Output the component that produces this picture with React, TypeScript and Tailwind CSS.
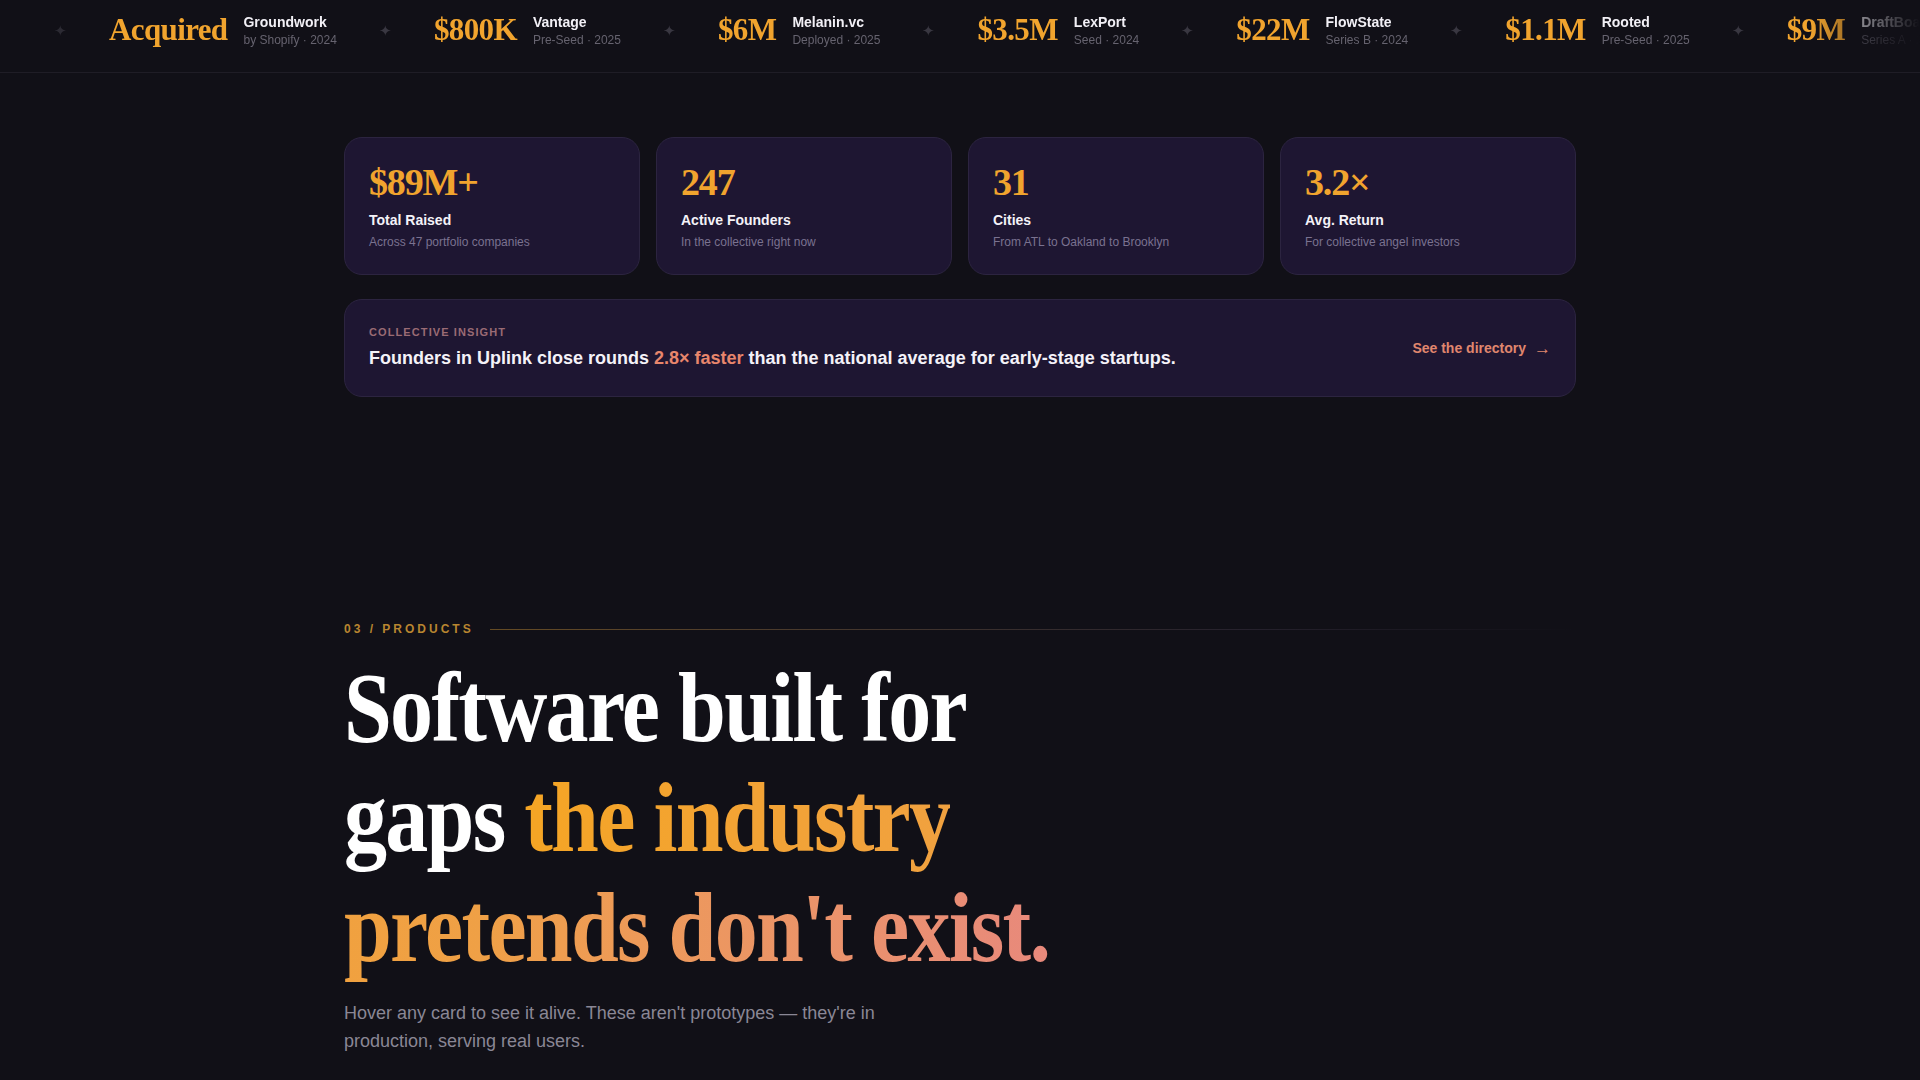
import React from 'react';

interface Deal {
  value: string;
  name: string;
  meta: string;
}

interface Stat {
  value: string;
  label: string;
  note: string;
}

const deals: Deal[] = [
  { value: 'Acquired', name: 'Groundwork', meta: 'by Shopify · 2024' },
  { value: '$800K', name: 'Vantage', meta: 'Pre-Seed · 2025' },
  { value: '$6M', name: 'Melanin.vc', meta: 'Deployed · 2025' },
  { value: '$3.5M', name: 'LexPort', meta: 'Seed · 2024' },
  { value: '$22M', name: 'FlowState', meta: 'Series B · 2024' },
  { value: '$1.1M', name: 'Rooted', meta: 'Pre-Seed · 2025' },
  { value: '$9M', name: 'DraftBoard', meta: 'Series A · 2024' },
];

const stats: Stat[] = [
  { value: '$89M+', label: 'Total Raised', note: 'Across 47 portfolio companies' },
  { value: '247', label: 'Active Founders', note: 'In the collective right now' },
  { value: '31', label: 'Cities', note: 'From ATL to Oakland to Brooklyn' },
  { value: '3.2×', label: 'Avg. Return', note: 'For collective angel investors' },
];

const Ticker: React.FC = () => (
  <div className="border-b border-[#1f1d26]">
    <div className="overflow-hidden pt-[12px] pb-[24px] [mask-image:linear-gradient(to_right,transparent,black_90px,black_calc(100%_-_110px),transparent)]">
      <div className="flex w-max items-center gap-[42px] pl-[54px]">
        {deals.map((d, i) => (
          <React.Fragment key={i}>
            <span className="text-[15px] leading-none text-[#393741]">✦</span>
            <div className="flex items-center gap-4">
              <span className="font-['Liberation_Serif',serif] text-[31px] leading-9 font-bold tracking-[-0.02em] text-[#f1a42e]">
                {d.value}
              </span>
              <div className="flex flex-col">
                <span className="text-[14px] leading-5 font-bold text-[#f2f0f6]">{d.name}</span>
                <span className="text-[12px] leading-4 text-[#66636f]">{d.meta}</span>
              </div>
            </div>
          </React.Fragment>
        ))}
      </div>
    </div>
  </div>
);

const StatCard: React.FC<{ stat: Stat }> = ({ stat }) => (
  <div className="rounded-[18px] border border-[#2c2440] bg-[#1e1632] p-6">
    <div className="font-['Liberation_Serif',serif] text-[38px] leading-10 font-bold tracking-[-0.03em] text-[#f1a42e]">
      {stat.value}
    </div>
    <div className="mt-2 text-[14px] leading-5 font-bold text-[#f4f2f8]">{stat.label}</div>
    <div className="mt-1 text-[12px] leading-4 text-[#7a7290]">{stat.note}</div>
  </div>
);

export default function App() {
  return (
    <div className="min-h-screen bg-[#111017] font-['Liberation_Sans',Arial,sans-serif] text-white">
      <Ticker />

      <section className="mx-auto max-w-7xl px-6 pt-16 pb-28">
        <div className="grid grid-cols-4 gap-4">
          {stats.map((s) => (
            <StatCard key={s.label} stat={s} />
          ))}
        </div>

        <div className="mt-6 flex items-center justify-between rounded-[18px] border border-[#2c2440] bg-[#1e1632] px-6 py-6">
          <div>
            <div className="text-[11px] leading-4 font-bold tracking-[0.1em] text-[#9a6b74] uppercase">
              Collective insight
            </div>
            <p className="mt-1 text-[18px] leading-7 font-bold text-[#f4f2f8]">
              Founders in Uplink close rounds <span className="text-[#e8866c]">2.8× faster</span> than the
              national average for early-stage startups.
            </p>
          </div>
          <a className="flex items-center gap-2 text-[14px] leading-5 font-bold text-[#e0876e]" href="#">
            See the directory
            <span className="text-[17px] leading-none">→</span>
          </a>
        </div>
      </section>

      <section className="mx-auto max-w-7xl px-6 pt-28 pb-24">
        <div className="flex items-center gap-4">
          <span className="text-[12px] leading-4 font-bold tracking-[0.25em] text-[#b98630] uppercase">
            03 / Products
          </span>
          <div className="h-px flex-1 bg-linear-to-r from-[#b98630]/50 via-[#3a3242]/50 via-70% to-transparent" />
        </div>

        <h2 className="mt-4 origin-left scale-x-[0.86] font-['Liberation_Serif',serif] text-[100px] leading-[110px] font-bold tracking-[-0.02em] text-white">
          Software built for
          <br />
          gaps{' '}
          <span className="bg-linear-to-r from-[#f5a524] via-[#efa046] to-[#e8897c] bg-clip-text text-transparent">
            the industry
            <br />
            pretends don't exist.
          </span>
        </h2>

        <p className="mt-4 max-w-xl text-[18px] leading-7 text-[#8a8795]">
          Hover any card to see it alive. These aren't prototypes — they're in production, serving real users.
        </p>
      </section>
    </div>
  );
}
